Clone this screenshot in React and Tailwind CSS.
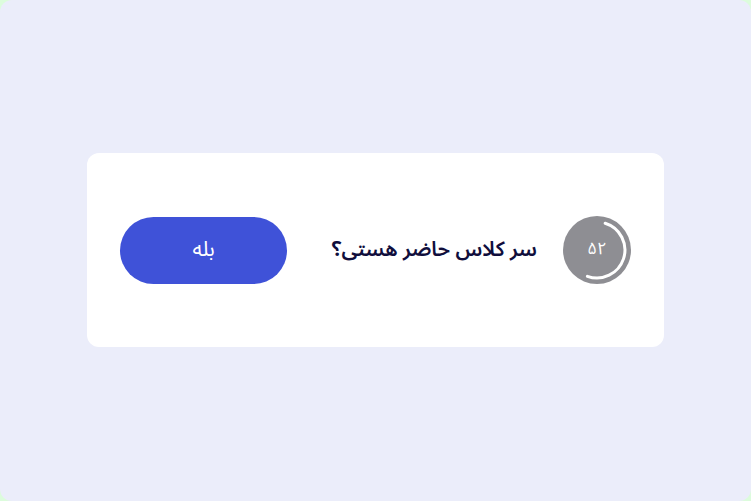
export default function App() {
  return (
    <div className="w-[751px] h-[501px] bg-[#dcfcdc]" style={{ fontFamily: '"Noto Sans Arabic", "DejaVu Sans", sans-serif' }}>
      <div dir="rtl" className="w-full h-full rounded-xl bg-[#ebedfa] flex items-center justify-center">
        <div className="w-[577px] h-[194px] mb-px bg-white rounded-xl flex items-center justify-between px-[33px]">
          <div className="flex items-center gap-[26px]">
            <div className="relative w-[68px] h-[68px] rounded-full bg-[#8e8e93] flex items-center justify-center">
              <svg className="absolute inset-0" width="68" height="68" viewBox="0 0 68 68">
                <path d="M42.19 7.22 A28 28 0 1 1 24.42 60.31" fill="none" stroke="#ffffff" strokeWidth="3" strokeLinecap="round" />
              </svg>
              <span className="relative text-white text-[17px]">۵۲</span>
            </div>
            <span className="text-[#100e3c] text-[20.5px] font-semibold">سر کلاس حاضر هستی؟</span>
          </div>
          <button className="w-[167px] h-[67px] rounded-full bg-[#3f52d8] text-white text-[21px]">بله</button>
        </div>
      </div>
    </div>
  );
}
